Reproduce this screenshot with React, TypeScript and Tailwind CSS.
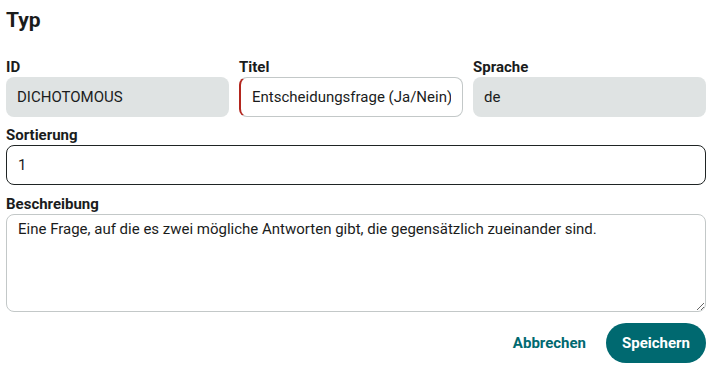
import React from "react";

const labelCls = "block text-[15px] leading-5 font-bold text-[#1a1c1c]";

export default function App() {
  return (
    <div className="w-[718px] h-[373px] bg-white pl-[6px] pr-[12px] pt-[6px] font-['Roboto',sans-serif] text-[#1a1c1c]">
      <h1 className="text-[21px] leading-7 font-bold">Typ</h1>

      <div className="mt-[23px] grid grid-cols-[223px_224px_1fr] gap-x-[10px]">
        <div>
          <label className={labelCls}>ID</label>
          <div className="h-10 rounded-lg bg-[#dfe3e3] px-[11px] flex items-center text-[15px]">
            DICHOTOMOUS
          </div>
        </div>
        <div>
          <label className={labelCls}>Titel</label>
          <input
            className="h-10 w-full rounded-lg border border-[#c3c8c8] border-l-2 border-l-[#b3261e] bg-white px-[11px] text-[15px] outline-none"
            defaultValue="Entscheidungsfrage (Ja/Nein)"
          />
        </div>
        <div>
          <label className={labelCls}>Sprache</label>
          <div className="h-10 rounded-lg bg-[#dfe3e3] px-[11px] flex items-center text-[15px]">
            de
          </div>
        </div>
      </div>

      <div className="mt-2">
        <label className={labelCls}>Sortierung</label>
        <input
          className="h-10 w-full rounded-lg border border-[#1f2424] bg-white px-[11px] text-[15px] outline-none"
          defaultValue="1"
        />
      </div>

      <div className="mt-[9px]">
        <label className={labelCls}>Beschreibung</label>
        <textarea
          className="block h-[98px] w-full rounded-lg border border-[#c3c8c8] bg-white px-[11px] py-[4px] text-[15px] leading-5 outline-none"
          defaultValue="Eine Frage, auf die es zwei mögliche Antworten gibt, die gegensätzlich zueinander sind."
        />
      </div>

      <div className="mt-[11px] flex justify-end items-center gap-2">
        <button className="h-10 px-3 rounded-full text-[15px] font-bold text-[#006970]">
          Abbrechen
        </button>
        <button className="h-10 w-[100px] rounded-full bg-[#006970] text-[15px] font-bold text-white">
          Speichern
        </button>
      </div>
    </div>
  );
}
